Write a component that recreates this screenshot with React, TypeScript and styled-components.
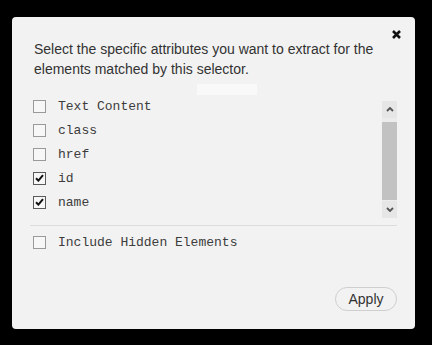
import React from 'react';
import styled, { createGlobalStyle } from 'styled-components';

const GlobalStyle = createGlobalStyle`
  html, body {
    margin: 0;
    padding: 0;
    background: #000;
  }
  body {
    width: 432px;
    height: 345px;
    overflow: hidden;
    font-family: "Liberation Sans", Arial, sans-serif;
  }
`;

const Dialog = styled.div`
  position: relative;
  box-sizing: border-box;
  margin: 17px 0 0 12px;
  width: 403px;
  height: 312px;
  padding: 22px 18px 18px 18px;
  background: #f2f2f2;
  border-radius: 4px;
  display: flex;
  flex-direction: column;
`;

// faint piece of the page behind, showing through
const Ghost = styled.div`
  position: absolute;
  left: 185px;
  top: 67px;
  width: 60px;
  height: 11px;
  background: rgba(255, 255, 255, 0.55);
`;

const Close = styled.button`
  position: absolute;
  top: 13px;
  right: 14px;
  width: 9px;
  height: 9px;
  padding: 0;
  border: 0;
  background: none;
  display: flex;
`;

const Description = styled.p`
  position: relative;
  margin: 0 4px;
  font-size: 14px;
  line-height: 20px;
  color: #333;
`;

const ListBox = styled.div`
  position: relative;
  margin-top: 21px;
  height: 120px;
  display: flex;
  overflow: hidden;
`;

const Items = styled.div`
  flex: 1;
  margin-top: -6px;
  padding-left: 3px;
`;

const Row = styled.label`
  display: flex;
  align-items: center;
  height: 24px;
  gap: 12px;
  font-family: "Liberation Mono", "Courier New", monospace;
  font-size: 13px;
  color: #3c3c3c;
`;

const Box = styled.span<{ $checked?: boolean }>`
  box-sizing: border-box;
  width: 13px;
  height: 13px;
  border: 1px solid ${(p) => (p.$checked ? '#5a5a5a' : '#9a9a9a')};
  background: #f7f7f7;
  display: flex;
  align-items: center;
  justify-content: center;
`;

const Scrollbar = styled.div`
  width: 15px;
  margin-top: 1px;
  height: 117px;
  display: flex;
  flex-direction: column;
  background: #ececec;
`;

const Arrow = styled.div`
  height: 17px;
  display: flex;
  align-items: center;
  justify-content: center;
  background: #e6e6e6;
`;

const Track = styled.div`
  flex: 1;
  padding: 4px 0 1px;
  display: flex;
`;

const Thumb = styled.div`
  flex: 1;
  background: #c2c2c2;
`;

const Divider = styled.hr`
  margin: 5px 0 0;
  border: 0;
  border-top: 1px solid #dcdcdc;
`;

const Options = styled.div`
  margin-top: 4px;
  padding-left: 3px;
`;

const Footer = styled.div`
  margin-top: auto;
  display: flex;
  justify-content: flex-end;
`;

const ApplyButton = styled.button`
  box-sizing: border-box;
  width: 62px;
  height: 24px;
  border: 1px solid #cfcfcf;
  border-radius: 12px;
  background: #f2f2f2;
  font-family: "Liberation Sans", Arial, sans-serif;
  font-size: 14px;
  color: #333;
  padding: 0;
`;

const attributes = [
  { name: 'Text Content', checked: false },
  { name: 'class', checked: false },
  { name: 'href', checked: false },
  { name: 'id', checked: true },
  { name: 'name', checked: true },
];

const Check = ({ checked }: { checked?: boolean }) => (
  <Box $checked={checked}>
    {checked && (
      <svg width="9" height="8" viewBox="0 0 9 8">
        <path d="M1 4.2 L3.4 6.6 L8 1.2" fill="none" stroke="#111" strokeWidth="2" />
      </svg>
    )}
  </Box>
);

export default function App() {
  return (
    <>
      <GlobalStyle />
      <Dialog>
        <Ghost />
        <Close aria-label="close">
          <svg width="9" height="9" viewBox="0 0 9 9">
            <path d="M1 1 L8 8 M8 1 L1 8" stroke="#111" strokeWidth="2.6" />
          </svg>
        </Close>
        <Description>
          Select the specific attributes you want to extract for the elements matched by this selector.
        </Description>
        <ListBox>
          <Items>
            {attributes.map((a) => (
              <Row key={a.name}>
                <Check checked={a.checked} />
                {a.name}
              </Row>
            ))}
          </Items>
          <Scrollbar>
            <Arrow>
              <svg width="8" height="5" viewBox="0 0 8 5">
                <path d="M1 4 L4 1 L7 4" fill="none" stroke="#555" strokeWidth="1.8" />
              </svg>
            </Arrow>
            <Track>
              <Thumb />
            </Track>
            <Arrow>
              <svg width="8" height="5" viewBox="0 0 8 5">
                <path d="M1 1 L4 4 L7 1" fill="none" stroke="#555" strokeWidth="1.8" />
              </svg>
            </Arrow>
          </Scrollbar>
        </ListBox>
        <Divider />
        <Options>
          <Row>
            <Check />
            Include Hidden Elements
          </Row>
        </Options>
        <Footer>
          <ApplyButton>Apply</ApplyButton>
        </Footer>
      </Dialog>
    </>
  );
}
